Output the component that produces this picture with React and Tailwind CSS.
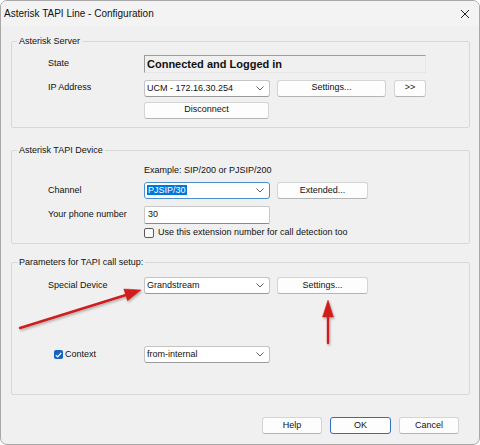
import React from 'react';

const FONT = "font-['Liberation_Sans',Arial,sans-serif]";

function Chevron() {
  return (
    <svg width="8" height="5" viewBox="0 0 8 5" className="shrink-0">
      <path d="M0.5 0.5 L4 4 L7.5 0.5" fill="none" stroke="#606060" strokeWidth="1" />
    </svg>
  );
}

function Combo({ children, focused }) {
  return (
    <div
      className={`w-[126px] h-[17px] shrink-0 bg-white rounded-[3px] border ${
        focused ? 'border-[#4a8fd0]' : 'border-[#c4c4c4] border-b-[#9a9a9a]'
      } flex items-center justify-between pl-[2px] pr-[5px]`}
    >
      <div className="truncate leading-[13px]">{children}</div>
      <Chevron />
    </div>
  );
}

function Btn({ children, w, primary }) {
  return (
    <div
      className={`${w} h-[17px] shrink-0 bg-[#fdfdfd] rounded-[3px] border ${
        primary ? 'border-[#2f6fba]' : 'border-[#d4d4d4] border-b-[#b4b4b4]'
      } flex items-center justify-center`}
    >
      {children}
    </div>
  );
}

function Check({ checked }) {
  if (checked) {
    return (
      <div className="w-[9px] h-[9px] shrink-0 rounded-[2px] bg-[#1565c0] flex items-center justify-center">
        <svg width="7" height="6" viewBox="0 0 7 6">
          <path d="M0.8 3.2 L2.6 5 L6.2 1" fill="none" stroke="white" strokeWidth="1.2" />
        </svg>
      </div>
    );
  }
  return <div className="w-[10px] h-[10px] shrink-0 rounded-[2px] bg-[#fbfbfb] border border-[#5a5a5a]" />;
}

function Group({ title, className, children }) {
  return (
    <fieldset className={`ml-[10px] mr-[9px] border border-[#d8d8d8] rounded-[2px] ${className}`}>
      <legend className="ml-[5px] px-[2px] leading-[16px]">{title}</legend>
      {children}
    </fieldset>
  );
}

function Row({ label, className, children }) {
  return (
    <div className={`flex items-center pl-[36px] ${className}`}>
      <div className="w-[96px] shrink-0">{label}</div>
      {children}
    </div>
  );
}

export default function App() {
  return (
    <div className={`${FONT} relative w-[480px] h-[445px] bg-white text-[9px] text-[#111]`}>
      <div className="w-full h-full bg-[#f0f0f0] border border-[#a8a8a8] rounded-[7px] overflow-hidden">
        {/* title bar */}
        <div className="h-[25px] flex items-center justify-between pl-[3px] pr-[9px] bg-[#f3f3f3]">
          <div className="text-[10px]">Asterisk TAPI Line - Configuration</div>
          <svg width="10" height="10" viewBox="0 0 10 10">
            <path d="M1 1 L9 9 M9 1 L1 9" stroke="#222" strokeWidth="1" />
          </svg>
        </div>

        <Group title="Asterisk Server" className="mt-[7px] pb-[8px]">
          <Row label="State" className="mt-[6px] h-[18px]">
            <div className="w-[282px] h-[18px] bg-[#f0f0f0] border-t border-l border-t-[#9d9d9d] border-l-[#9d9d9d] border-b border-r border-b-[#e6e6e6] border-r-[#e6e6e6] flex items-center pl-[2px] font-bold text-[11px]">
              Connected and Logged in
            </div>
          </Row>
          <Row label="IP Address" className="mt-[6px] h-[18px]">
            <Combo>UCM - 172.16.30.254</Combo>
            <div className="ml-[7px]">
              <Btn w="w-[109px]">Settings...</Btn>
            </div>
            <div className="ml-[8px]">
              <Btn w="w-[32px]">&gt;&gt;</Btn>
            </div>
          </Row>
          <Row label="" className="mt-[4px] h-[18px]">
            <Btn w="w-[125px]">Disconnect</Btn>
          </Row>
        </Group>

        <Group title="Asterisk TAPI Device" className="mt-[14px] pb-[4px]">
          <Row label="" className="mt-[6px] h-[14px]">
            <div>Example: SIP/200 or PJSIP/200</div>
          </Row>
          <Row label="Channel" className="mt-[4px] h-[17px]">
            <Combo focused>
              <span className="bg-[#0078d7] text-white px-[1px]">PJSIP/30</span>
            </Combo>
            <div className="ml-[7px]">
              <Btn w="w-[91px]">Extended...</Btn>
            </div>
          </Row>
          <Row label="Your phone number" className="mt-[7px] h-[18px]">
            <div className="w-[126px] h-[18px] bg-white border border-[#c8c8c8] border-b-[#8a8a8a] rounded-[2px] flex items-center pl-[3px]">
              30
            </div>
          </Row>
          <Row label="" className="mt-[2px] h-[13px]">
            <Check />
            <div className="ml-[4px]">Use this extension number for call detection too</div>
          </Row>
        </Group>

        <Group title="Parameters for TAPI call setup:" className="mt-[10px] pb-[31px]">
          <Row label="Special Device" className="mt-[7px] h-[17px]">
            <Combo>Grandstream</Combo>
            <div className="ml-[7px]">
              <Btn w="w-[91px]">Settings...</Btn>
            </div>
          </Row>
          <div className="flex items-center h-[17px] mt-[52px] pl-[42px]">
            <div className="w-[90px] shrink-0 flex items-center">
              <Check checked />
              <div className="ml-[2px]">Context</div>
            </div>
            <Combo>from-internal</Combo>
          </div>
        </Group>

        <div className="flex justify-end gap-[8px] mt-[22px] pr-[20px]">
          <Btn w="w-[60px]">Help</Btn>
          <Btn w="w-[61px]" primary>OK</Btn>
          <Btn w="w-[60px]">Cancel</Btn>
        </div>
      </div>

      {/* annotation arrows */}
      <svg className="absolute inset-0 pointer-events-none" width="480" height="445" viewBox="0 0 480 445">
        <defs>
          <filter id="sh" x="-20%" y="-20%" width="140%" height="140%">
            <feDropShadow dx="1" dy="1.5" stdDeviation="1" floodColor="#000" floodOpacity="0.3" />
          </filter>
        </defs>
        <g filter="url(#sh)" fill="#d01f1f" stroke="#d01f1f">
          <path d="M20 328 L126 295" strokeWidth="2.4" fill="none" strokeLinecap="round" />
          <polygon points="141,290 127.5,300.8 123.8,289" strokeWidth="0.5" />
          <path d="M328 343 L328 315" strokeWidth="2.4" fill="none" strokeLinecap="round" />
          <polygon points="328,300 333.5,317 322.5,317" strokeWidth="0.5" />
        </g>
      </svg>
    </div>
  );
}
